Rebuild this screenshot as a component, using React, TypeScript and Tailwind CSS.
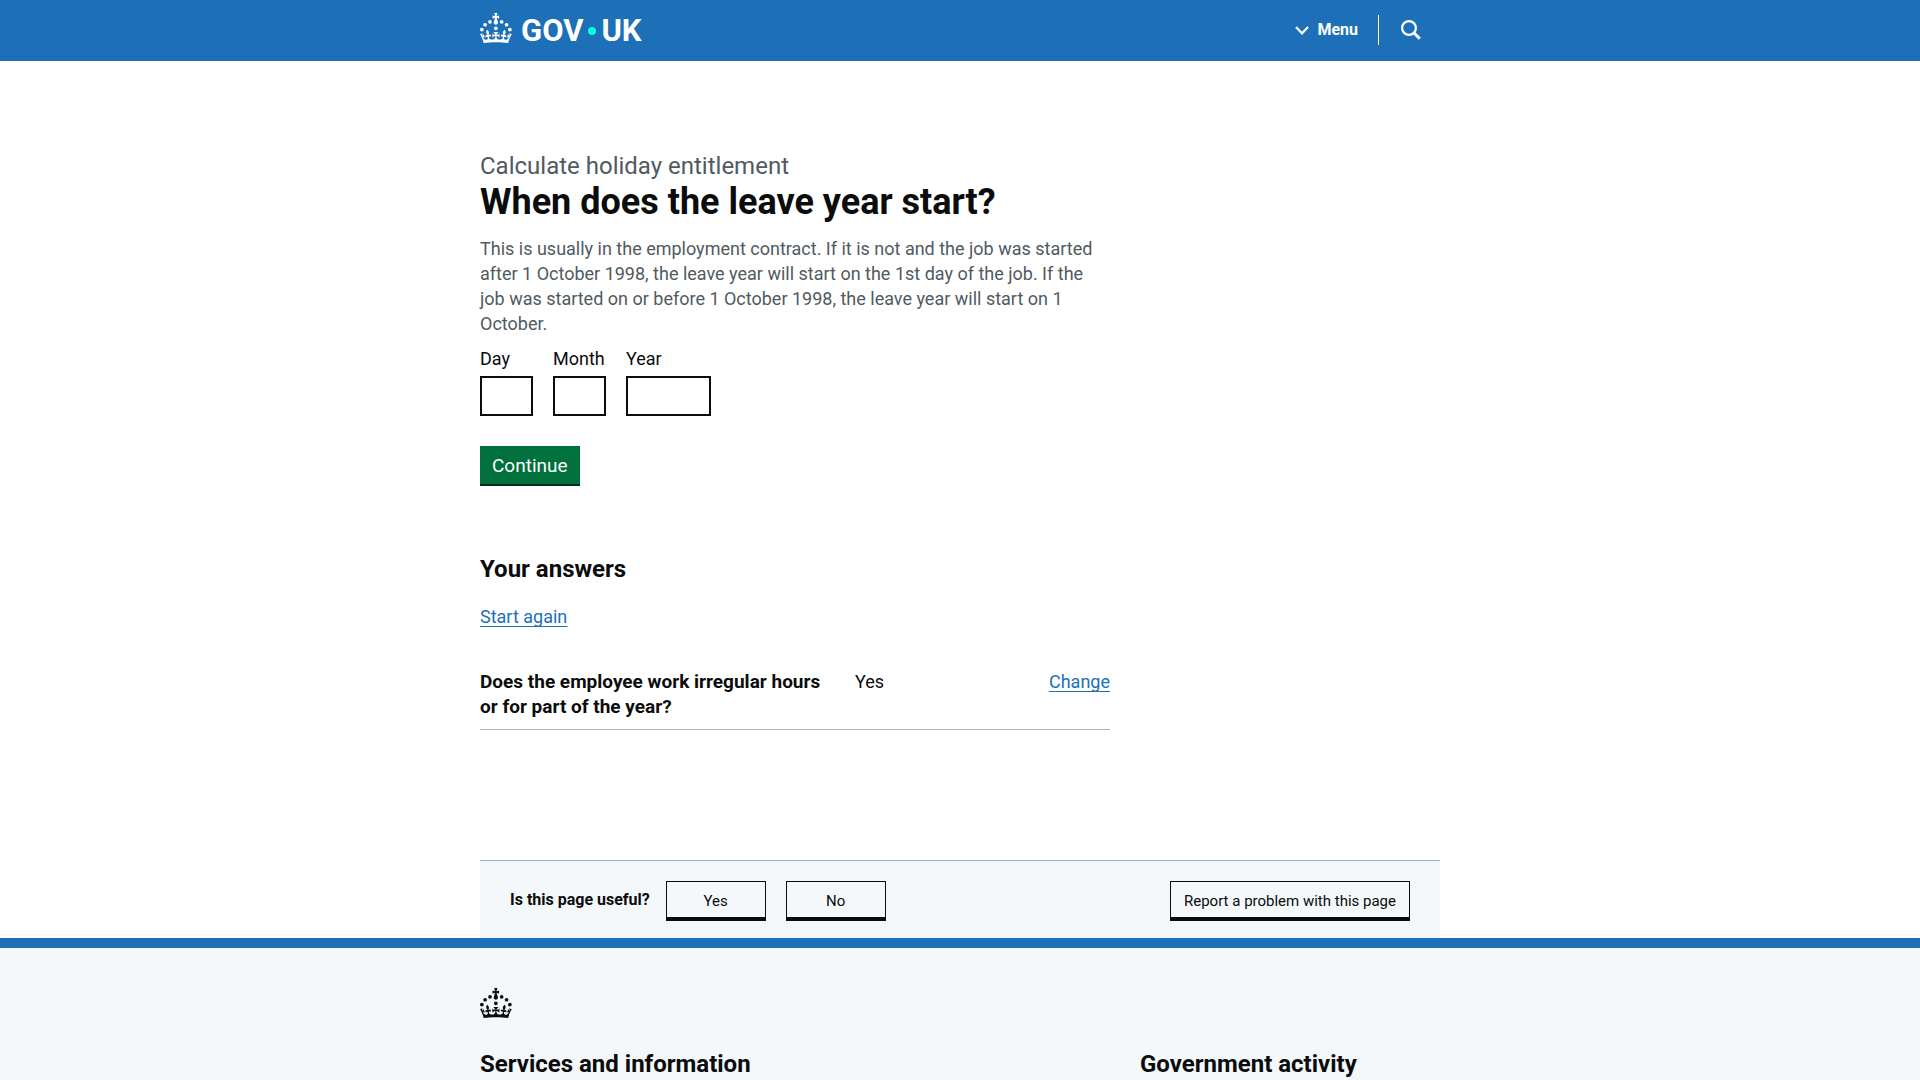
import type { ReactNode } from "react";

function Crown() {
  return (
    <svg viewBox="0 0 64 60" className="h-[30px] w-8 shrink-0 fill-current" aria-hidden="true">
      <circle cx="20" cy="17.6" r="3.7" />
      <circle cx="10.2" cy="23.5" r="3.7" />
      <circle cx="3.7" cy="33.2" r="3.7" />
      <circle cx="31.7" cy="30.6" r="3.7" />
      <circle cx="43.3" cy="17.6" r="3.7" />
      <circle cx="53.2" cy="23.5" r="3.7" />
      <circle cx="59.7" cy="33.2" r="3.7" />
      <path d="M33.1,9.8c.2-.1.3-.3.5-.5l4.6,2.4v-6.8l-4.6,1.5c-.1-.2-.3-.3-.5-.5l1.9-5.9h-6.7l1.9,5.9c-.2.1-.3.3-.5.5l-4.6-1.5v6.8l4.6-2.4c.1.2.3.3.5.5l-2.6,8c-.9,2.8,1.2,5.7,4.1,5.7h0c3,0,5.1-2.9,4.1-5.7l-2.6-8ZM37,37.9s-3.4,3.8-4.1,6.1c2.2,0,4.2-.5,6.4-2.8l-.7,8.5c-2-2.8-4.4-4.1-5.7-3.8.1,3.1.5,6.7,5.8,7.2,3.7.3,6.7-1.5,7-3.8.4-2.6-2-4.3-3.7-1.6-1.4-4.5,2.4-6.1,4.9-3.2-1.9-4.5-1.8-7.7,2.4-10.9,3,4,2.6,7.3-1.2,11.1,2.4-1.3,6.2,0,4,4.6-1.2-2.8-3.7-2.2-4.2.2-.3,1.7.7,3.7,3,4.2,1.9.3,4.7-.9,7-5.9-1.3,0-2.4.7-3.9,1.7l2.4-8c.6,2.3,1.4,3.7,2.2,4.5.6-1.6.5-2.8,0-5.3l5,1.8c-2.6,3.6-5.2,8.7-7.3,17.5-7.4-1.1-15.7-1.7-24.5-1.7h0c-8.8,0-17.1.6-24.5,1.7-2.1-8.9-4.7-13.9-7.3-17.5l5-1.8c-.5,2.5-.6,3.7,0,5.3.8-.8,1.6-2.3,2.2-4.5l2.4,8c-1.5-1-2.6-1.7-3.9-1.7,2.3,5,5.2,6.2,7,5.9,2.3-.4,3.3-2.4,3-4.2-.5-2.4-3-3.1-4.2-.2-2.2-4.6,1.6-6,4-4.6-3.7-3.7-4.2-7.1-1.2-11.1,4.2,3.2,4.3,6.4,2.4,10.9,2.5-2.8,6.3-1.3,4.9,3.2-1.8-2.7-4.1-1-3.7,1.6.3,2.3,3.3,4.1,7,3.8,5.4-.5,5.7-4.2,5.8-7.2-1.3-.2-3.7,1-5.7,3.8l-.7-8.5c2.2,2.3,4.2,2.7,6.4,2.8-.7-2.3-4.1-6.1-4.1-6.1h10.6,0Z" />
    </svg>
  );
}

function Header() {
  return (
    <header className="bg-[#1d70b8] text-white">
      <div className="mx-auto flex h-[61px] max-w-[960px] items-start justify-between">
        <a href="#home" aria-label="GOV.UK" className="flex items-start pt-[13px]">
          <Crown />
          <span className="ml-[9px] flex items-center pt-0.5 text-[31px] leading-8 font-bold">
            GOV
            <span className="mx-[5px] size-2 rounded-full bg-[#00ffe0]" />
            UK
          </span>
        </a>
        <div className="flex items-center pt-[15px]">
          <button type="button" className="flex items-center gap-2 pr-5 text-base leading-5 font-bold">
            <svg viewBox="0 0 14 9" className="h-[9px] w-3.5 fill-none stroke-white" strokeWidth="2.2" aria-hidden="true">
              <path d="M1 1 7 7.3 13 1" />
            </svg>
            Menu
          </button>
          <button
            type="button"
            aria-label="Search GOV.UK"
            className="flex h-[30px] items-center border-l border-white pr-[19px] pl-[22px]"
          >
            <svg viewBox="0 0 20 20" className="size-5 fill-none stroke-white" strokeWidth="2.2" aria-hidden="true">
              <circle cx="8" cy="8" r="6.9" />
              <path d="m12.8 12.8 6 6" strokeWidth="3" />
            </svg>
          </button>
        </div>
      </div>
    </header>
  );
}

const dateFields = [
  { id: "day", label: "Day", column: "mr-5 w-[53px]" },
  { id: "month", label: "Month", column: "mr-5 w-[53px]" },
  { id: "year", label: "Year", column: "w-[85px]" },
];

function TextLink({ href, children }: { href: string; children: ReactNode }) {
  return (
    <a
      href={href}
      className="text-[#1d70b8] underline decoration-1 underline-offset-[3px] [text-decoration-skip-ink:none]"
    >
      {children}
    </a>
  );
}

function FeedbackButton({ className, children }: { className: string; children: ReactNode }) {
  return (
    <button
      type="button"
      className={`h-10 border border-b-4 border-[#0b0c0c] pt-0.5 text-[15px] leading-5 ${className}`}
    >
      {children}
    </button>
  );
}

export default function App() {
  return (
    <div className="flex min-h-screen flex-col bg-white font-[Roboto,Arial,sans-serif] text-[18px] leading-[25px] text-[#0b0c0c]">
      <Header />
      <div className="mx-auto w-full max-w-[960px]">
        <main className="max-w-[630px] pt-[90px]">
          <form onSubmit={(e) => e.preventDefault()}>
            <span className="block text-2xl leading-[30px] text-[#505a5f]">Calculate holiday entitlement</span>
            <h1 className="mt-px text-4xl leading-10 font-bold">When does the leave year start?</h1>
            <p className="mt-3.5 max-w-[620px] text-[#505a5f]">
              This is usually in the employment contract. If it is not and the job was started after 1 October 1998, the
              leave year will start on the 1st day of the job. If the job was started on or before 1 October 1998, the
              leave year will start on 1 October.
            </p>
            <div className="mt-2.5 flex">
              {dateFields.map((f) => (
                <div key={f.id} className={f.column}>
                  <label htmlFor={f.id} className="block">
                    {f.label}
                  </label>
                  <input
                    id={f.id}
                    inputMode="numeric"
                    className="mt-[5px] block h-10 w-full border-2 border-[#0b0c0c] px-1"
                  />
                </div>
              ))}
            </div>
            <button
              type="submit"
              className="mt-[30px] block h-10 border-b-2 border-[#002d18] bg-[#00703c] px-3 text-[19px] text-white"
            >
              Continue
            </button>
          </form>
          <section>
            <h2 className="mt-[68px] text-2xl leading-[30px] font-bold">Your answers</h2>
            <p className="mt-5">
              <TextLink href="#start">Start again</TextLink>
            </p>
            <dl className="mt-10 flex border-b border-[#b1b4b6] pb-2.5">
              <dt className="w-[375px] pr-5 text-[19px] font-bold">
                Does the employee work irregular hours or for part of the year?
              </dt>
              <dd className="flex-1">Yes</dd>
              <dd>
                <TextLink href="#change">Change</TextLink>
              </dd>
            </dl>
          </section>
        </main>
        <div className="mt-[130px] flex items-start border-t border-[#8eb8dc] bg-[#f4f8fb] px-[30px] pt-5 pb-[17px]">
          <h2 className="mr-4 text-base leading-[38px] font-bold">Is this page useful?</h2>
          <FeedbackButton className="mr-5 w-[100px]">Yes</FeedbackButton>
          <FeedbackButton className="w-[100px]">No</FeedbackButton>
          <FeedbackButton className="ml-auto w-[240px]">Report a problem with this page</FeedbackButton>
        </div>
      </div>
      <footer className="flex-1 border-t-[10px] border-[#1d70b8] bg-[#f4f8fb]">
        <div className="mx-auto max-w-[960px] pt-10">
          <Crown />
          <div className="mt-[31px] grid grid-cols-3 gap-x-[30px] text-2xl leading-[30px] font-bold">
            <h2 className="col-span-2">Services and information</h2>
            <h2>Government activity</h2>
          </div>
        </div>
      </footer>
    </div>
  );
}
